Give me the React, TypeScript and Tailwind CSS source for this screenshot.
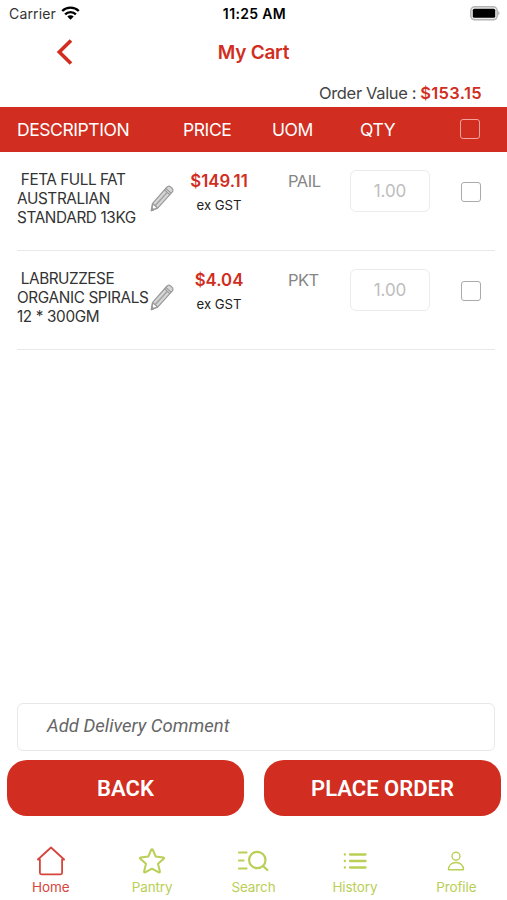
import type { ReactNode } from "react";

type CartItem = {
  name: string;
  price: string;
  uom: string;
  qty: string;
};

const ITEMS: CartItem[] = [
  { name: " FETA FULL FAT\nAUSTRALIAN\nSTANDARD 13KG", price: "$149.11", uom: "PAIL", qty: "1.00" },
  { name: " LABRUZZESE\nORGANIC SPIRALS\n12 * 300GM", price: "$4.04", uom: "PKT", qty: "1.00" },
];

function WifiIcon() {
  return (
    <svg width="19" height="15" viewBox="0 0 19 15" aria-hidden="true">
      <g fill="none" stroke="#000" strokeWidth="2.4">
        <path d="M1.2 5a11.800 11.800 0 0 1 16.600 0" />
        <path d="M4.100 8.300a7.700 7.700 0 0 1 10.800 0" />
      </g>
      <path d="M6.300 10.600a4.500 4.500 0 0 1 6.400 0L9.500 13.800z" />
    </svg>
  );
}

function BatteryIcon() {
  return (
    <svg width="30" height="15" viewBox="0 0 30 15" aria-hidden="true">
      <rect x="0.8" y="0.8" width="26.4" height="13" rx="4" fill="#eee" stroke="#b4b4b4" strokeWidth="1.500" />
      <rect x="2.800" y="2.800" width="22.400" height="9" rx="1.500" />
      <path d="M28.300 5.100c1.600.8 1.600 3.600 0 4.400z" fill="#aaa" />
    </svg>
  );
}

function PencilIcon() {
  return (
    <svg width="24" height="27" viewBox="0 0 24 27" fill="none" stroke="#999" strokeWidth="1.2" strokeLinejoin="round" aria-hidden="true">
      <path d="M1.300 25.600l1.100-7L16.600 2.500c1.200-1.400 2.800-1.600 4.200-.4l1 .9c1.400 1.200 1.500 2.800.3 4.200L7.700 23.200z" fill="#d6d6d6" />
      <path d="M2.800 18.800l4.600 4-5.700 2.400z" fill="#fff" />
      <path d="M14.500 4.900l5.300 4.700M15.800 3.400l5.300 4.700" />
      <path d="M5.300 20.600L17.300 7.200" stroke="#a3a3a3" strokeWidth="1.500" />
      <path d="M1.300 25.600l.5-2.800 2 1.800z" fill="#888" />
    </svg>
  );
}

function Checkbox({ className }: { className: string }) {
  return <span className={`block size-5 rounded-[3px] border-[1.5px] ${className}`} />;
}

function CartRow({ item }: { item: CartItem }) {
  return (
    <div className="mr-3 ml-[17px] grid h-[99px] grid-cols-[133px_24px_90px_86px_80px_1fr] items-start border-b border-[#e9e9e9] pt-[18px]">
      <div className="pt-px text-[15.3px] leading-[18.9px] tracking-[-0.36px] whitespace-pre text-[#333] first-line:tracking-[-0.46px]">
        {item.name}
      </div>
      <div className="pt-[15px]">
        <PencilIcon />
      </div>
      <div className="text-center">
        <div className="pt-px text-[16.8px] leading-5 font-semibold text-[#d12d20]">{item.price}</div>
        <div className="mt-[5px] text-[13.2px] leading-[18px] tracking-[-0.05px] text-[#222]">ex GST</div>
      </div>
      <div className="pt-px pl-[24px] text-[16.5px] leading-5 tracking-[-0.5px] text-[#858585]">{item.uom}</div>
      <div className="flex h-[42px] items-center justify-center rounded-md border border-[#ececec] pt-0.5 text-[17px] tracking-[-0.1px] text-[#bdbdbd]">
        {item.qty}
      </div>
      <div className="pt-3 pl-[31px]">
        <Checkbox className="border-[#aaa]" />
      </div>
    </div>
  );
}

function Tab({ label, color = "text-[#b9cf56]", children }: { label: string; color?: string; children: ReactNode }) {
  return (
    <div className={`flex flex-1 flex-col items-center ${color}`}>
      <div className="flex h-[32px] items-center">{children}</div>
      <span className="mt-0.5 text-[13.5px] leading-4 tracking-[-0.1px]">{label}</span>
    </div>
  );
}

export default function App() {
  return (
    <div className="flex h-[900px] w-[507px] flex-col overflow-hidden bg-white font-['Inter','Liberation_Sans',sans-serif]">
      <div className="grid h-[27px] grid-cols-3 items-center pr-[7px] pl-[9px] text-[14px]">
        <div className="flex items-center gap-[5px] text-[#333]">
          <span className="tracking-[0.15px]">Carrier</span>
          <WifiIcon />
        </div>
        <span className="text-center text-[14px] font-semibold tracking-[0.35px] text-black">11:25 AM</span>
        <div className="flex justify-end">
          <BatteryIcon />
        </div>
      </div>

      <div className="grid h-[50px] grid-cols-3 items-center">
        <svg className="ml-[56px]" width="17" height="26" viewBox="0 0 17 26" fill="none" stroke="#d12d20" strokeWidth="3.6" aria-hidden="true">
          <path d="M15 1.500L3.300 13l11.700 11.500" />
        </svg>
        <h1 className="pt-[3px] text-center text-[19px] font-semibold tracking-[-0.25px] text-[#d12d20]">My Cart</h1>
      </div>

      <div className="flex h-[30px] items-center justify-end gap-1 pt-0.5 pr-[25px] text-[16.5px] tracking-[-0.35px] text-[#444]">
        <span>Order Value :</span>
        <span className="font-semibold tracking-[0.35px] text-[#d12d20]">$153.15</span>
      </div>

      <div className="grid h-[45px] shrink-0 grid-cols-[166px_89px_88px_100px_1fr] items-center bg-[#d12d20] pl-[17px] text-[17.5px] tracking-[-0.42px] text-white">
        <span className="pt-0.5">DESCRIPTION</span>
        <span className="pt-0.5">PRICE</span>
        <span className="pt-0.5">UOM</span>
        <span className="pt-0.5">QTY</span>
        <Checkbox className="-mt-0.5 border-[#f0a49d]" />
      </div>

      <div>
        {ITEMS.map((item) => (
          <CartRow key={item.name} item={item} />
        ))}
      </div>

      <div className="mt-auto mr-3 ml-[17px] flex h-[48px] shrink-0 items-center rounded-md border border-[#e8e8e8] pl-[29px] font-['Roboto',sans-serif] text-[18.5px] text-[#666] italic">
        Add Delivery Comment
      </div>

      <div className="mt-[9px] flex h-[56px] shrink-0 gap-5 pr-1.5 pl-[7px] font-['Roboto',sans-serif] text-[22px] font-semibold text-white">
        <button className="flex-1 rounded-[20px] bg-[#d12d20] pt-px">BACK</button>
        <button className="flex-1 rounded-[20px] bg-[#d12d20] pt-px">PLACE ORDER</button>
      </div>

      <nav className="mt-[29px] flex h-[55px] shrink-0">
        <Tab label="Home" color="text-[#d6453c]">
          <svg width="30" height="30" viewBox="0 0 30 30" fill="none" stroke="currentColor" strokeWidth="1.8" strokeLinecap="round" strokeLinejoin="round" aria-hidden="true">
            <path d="M3.900 13.500v13.300q0 1.500 1.500 1.500h19.200q1.500 0 1.500-1.500V13.500h2L15 1.500 1.900 13.500z" />
          </svg>
        </Tab>
        <Tab label="Pantry">
          <svg width="28" height="28" viewBox="0 0 28 28" fill="none" stroke="currentColor" strokeWidth="2" strokeLinejoin="round" aria-hidden="true">
            <path d="M14 2.300q.6 0 .9.700l2.800 6.600 7.600.8q1.400.3.400 1.300l-5.700 5 1.900 7.800q.1 1.400-1.100.9L14 21.600l-6.800 3.800q-1.200.5-1.100-.9L8 16.700l-5.700-5q-1-1 .4-1.300l7.600-.8L13.100 3q.3-.7.900-.7z" />
          </svg>
        </Tab>
        <Tab label="Search">
          <svg className="mr-0.5" width="32" height="24" viewBox="0 0 32 24" fill="none" stroke="currentColor" strokeWidth="2.200" strokeLinecap="round" aria-hidden="true">
            <path d="M2 3.500h7.500M2 11.500h4.500M2 19.500h7.500M26 17l4.300 4" />
            <circle cx="20.300" cy="11" r="8.200" />
          </svg>
        </Tab>
        <Tab label="History">
          <svg width="24" height="18" viewBox="0 0 24 18" fill="none" stroke="currentColor" strokeWidth="2.300" strokeLinecap="round" aria-hidden="true">
            <path d="M7 2.500h15.500M7 9h15.500M7 15.500h15.500" />
            <path d="M1.800 2.500h.1M1.800 9h.1M1.800 15.500h.1" />
          </svg>
        </Tab>
        <Tab label="Profile">
          <svg width="18" height="20" viewBox="0 0 18 20" fill="none" stroke="currentColor" strokeWidth="1.400" strokeLinejoin="round" aria-hidden="true">
            <circle cx="9" cy="5.200" r="4" />
            <path d="M1.500 18.700c0-4.500 3-7.200 7.500-7.200s7.500 2.700 7.500 7.200z" />
          </svg>
        </Tab>
      </nav>
    </div>
  );
}
